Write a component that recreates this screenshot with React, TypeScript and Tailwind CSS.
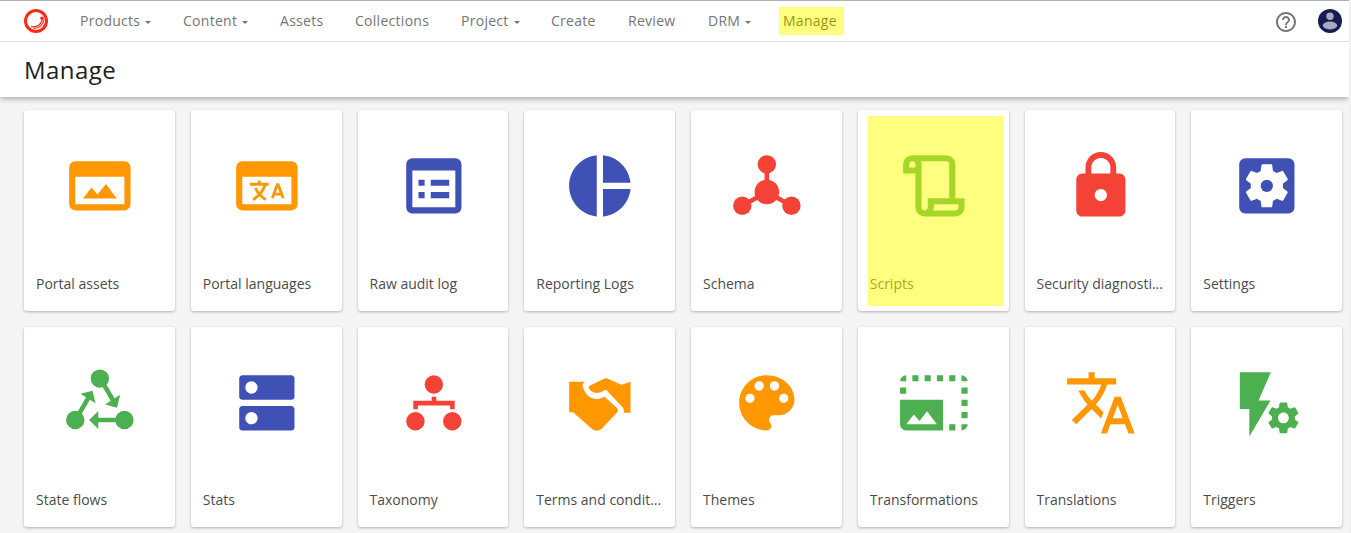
import React from "react";
import {
  MdDns,
  MdHelpOutline,
  MdLock,
  MdPhotoSizeSelectLarge,
  MdPieChart,
  MdTranslate,
} from "react-icons/md";

const GEAR =
  "M19.43 12.98c.04-.32.07-.64.07-.98s-.03-.66-.07-.98l2.11-1.65c.19-.15.24-.42.12-.64l-2-3.46c-.12-.22-.39-.3-.61-.22l-2.49 1c-.52-.4-1.08-.73-1.69-.98l-.38-2.65C14.46 2.18 14.25 2 14 2h-4c-.25 0-.46.18-.49.42l-.38 2.65c-.61.25-1.17.59-1.69.98l-2.49-1c-.23-.09-.49 0-.61.22l-2 3.46c-.13.22-.07.49.12.64l2.11 1.65c-.04.32-.07.65-.07.98s.03.66.07.98l-2.11 1.65c-.19.15-.24.42-.12.64l2 3.46c.12.22.39.3.61.22l2.49-1c.52.4 1.08.73 1.69.98l.38 2.65c.03.24.24.42.49.42h4c.25 0 .46-.18.49-.42l.38-2.65c.61-.25 1.17-.59 1.69-.98l2.49 1c.23.09.49 0 .61-.22l2-3.46c.12-.22.07-.49-.12-.64l-2.11-1.65z";
const GEAR_HOLE =
  "M12 15.5c-1.93 0-3.5-1.57-3.5-3.5s1.57-3.5 3.5-3.5 3.5 1.57 3.5 3.5-1.57 3.5-3.5 3.5z";

function Svg({ children }: { children: React.ReactNode }) {
  return (
    <svg viewBox="0 0 24 24" className="size-full" fill="currentColor">
      {children}
    </svg>
  );
}

const windowFrame = "M4 4h16a2 2 0 0 1 2 2v12a2 2 0 0 1-2 2H4a2 2 0 0 1-2-2V6a2 2 0 0 1 2-2zM4 9v9h16V9z";

const PortalAssets = () => (
  <Svg>
    <path fillRule="evenodd" d={windowFrame} />
    <path d="M6.5 16.1l2.8-3.6 1.9 2.3L14 11.4l3.5 4.7z" />
  </Svg>
);

const PortalLanguages = () => (
  <Svg>
    <path fillRule="evenodd" d={windowFrame} />
    <g fill="none" stroke="currentColor" strokeWidth="0.95">
      <path d="M6.5 11.5h6.1M9.5 10.3v1.2M11.4 11.7C10.8 13.8 9.3 15.4 7.5 16.5M8.3 12.7c.7 1.6 1.8 2.8 3.3 3.8" />
      <path d="M13.8 16l1.6-4.4h.3l1.6 4.4M14.4 14.7h2.4" />
    </g>
  </Svg>
);

const AuditLog = () => (
  <Svg>
    <path
      fillRule="evenodd"
      d="M5 3h14a2 2 0 0 1 2 2v14a2 2 0 0 1-2 2H5a2 2 0 0 1-2-2V5a2 2 0 0 1 2-2zM5 7v12h14V7z"
    />
    <path d="M7 10h2v2H7zM11 10h6v2h-6zM7 14h2v2H7zM11 14h6v2h-6z" />
  </Svg>
);

const Schema = () => (
  <Svg>
    <path d="M12 5v9M12 14l-8 4.5M12 14l8 4.5" stroke="currentColor" strokeWidth="1.5" />
    <circle cx="12" cy="5" r="3" />
    <circle cx="12" cy="14" r="4" />
    <circle cx="4" cy="18.5" r="3" />
    <circle cx="20" cy="18.5" r="3" />
  </Svg>
);

const Script = () => (
  <Svg>
    <path
      fillRule="evenodd"
      d="M5 2h11a3 3 0 0 1 3 3v11h3v3a3 3 0 0 1-3 3H9a3 3 0 0 1-3-3V8H2V5a3 3 0 0 1 3-3zM4 6h2V5a1 1 0 0 0-2 0zM7.8 4Q8 4.4 8 5v14a1 1 0 0 0 2 0v-3h7V5a1 1 0 0 0-1-1zM12 18v1q0 .5-.2 1H19a1 1 0 0 0 1-1v-1z"
    />
  </Svg>
);

const SettingsBox = () => (
  <Svg>
    <rect x="3" y="3" width="18" height="18" rx="2" />
    <path d={GEAR} fill="#fff" transform="translate(3.6 3.6) scale(.7)" />
    <circle cx="12" cy="12" r="2" />
  </Svg>
);

const StateFlows = () => (
  <Svg>
    <circle cx="12" cy="4.1" r="3" />
    <circle cx="4" cy="17.6" r="3" />
    <circle cx="20" cy="17.6" r="3" />
    <path
      d="M5 16l3.3-5.7M13 5.5l3.3 5.7M19 17.6h-8"
      stroke="currentColor"
      strokeWidth="1.5"
    />
    <path d="M9.6 8.1L5.7 9l4.9 3.1zM17.6 13.6l-3.9-1.1 4.9-3.1zM8.5 17.6l3-2.95v5.9z" />
  </Svg>
);

const Taxonomy = () => (
  <Svg>
    <circle cx="12" cy="6" r="3" />
    <circle cx="6" cy="18" r="3" />
    <circle cx="18" cy="18" r="3" />
    <path d="M11.3 10h1.5v1.3h6v2.8h-1.5v-1.2H6.8v1.2H5.3v-2.8h6z" />
  </Svg>
);

const Handshake = () => (
  <Svg>
    <path d="M2 5.1h5.2c-.6.3-.9.8-.8 1.400.4 1.700 1.400 3.100 2.600 3.800 1.400.8 3 .5 4.500-.3l4 3.600c.5.5.5 1.100 0 1.600l-4.900 5.200c-.9.8-2.300.8-3.200 0L3.300 15.100H2z" />
    <path d="M8.500 6.500L13.200 4.200q.8-.4 1.600 0L19.100 6.100 22 5.100v10.100h-2.200c.1-.8 0-1.300-.5-1.900L14 7.700 12 8.600c-1.500.4-2.800 0-3.500-1.200q-.3-.6 0-.9z" />
  </Svg>
);

const Palette = () => (
  <Svg>
    <path d="M12 3c-4.970 0-9 4.030-9 9s4.030 9 9 9c.83 0 1.500-.67 1.500-1.500 0-.39-.15-.74-.39-1.010-.23-.26-.38-.61-.38-.99 0-.83.67-1.500 1.500-1.500H16c2.760 0 5-2.240 5-5 0-4.420-4.030-8-9-8zm-5.500 9c-.83 0-1.500-.67-1.500-1.500S5.670 9 6.500 9 8 9.670 8 10.500 7.330 12 6.500 12zm3-4C8.670 8 8 7.330 8 6.500S8.670 5 9.500 5s1.500.67 1.500 1.500S10.330 8 9.500 8zm5 0c-.83 0-1.500-.67-1.500-1.500S13.670 5 14.500 5s1.500.67 1.500 1.500S15.330 8 14.500 8zm3 4c-.83 0-1.500-.67-1.500-1.500S16.670 9 17.500 9s1.500.67 1.500 1.500-.67 1.500-1.500 1.500z" />
  </Svg>
);

const Trigger = () => (
  <Svg>
    <path d="M3.200 2h10.100l-4 9.200h3.900L6.300 23v-9H3.200z" />
    <path fillRule="evenodd" d={GEAR + GEAR_HOLE} transform="translate(11.400 10.900) scale(.5)" />
  </Svg>
);

type Tile = { label: string; color: string; Icon: React.ComponentType<any>; marked?: boolean };

const ORANGE = "text-[#ff9800]";
const INDIGO = "text-[#3f51b5]";
const RED = "text-[#f44336]";
const GREEN = "text-[#4caf50]";

const tiles: Tile[] = [
  { label: "Portal assets", color: ORANGE, Icon: PortalAssets },
  { label: "Portal languages", color: ORANGE, Icon: PortalLanguages },
  { label: "Raw audit log", color: INDIGO, Icon: AuditLog },
  { label: "Reporting Logs", color: INDIGO, Icon: MdPieChart },
  { label: "Schema", color: RED, Icon: Schema },
  { label: "Scripts", color: GREEN, Icon: Script, marked: true },
  { label: "Security diagnosti...", color: RED, Icon: MdLock },
  { label: "Settings", color: INDIGO, Icon: SettingsBox },
  { label: "State flows", color: GREEN, Icon: StateFlows },
  { label: "Stats", color: INDIGO, Icon: MdDns },
  { label: "Taxonomy", color: RED, Icon: Taxonomy },
  { label: "Terms and condit...", color: ORANGE, Icon: Handshake },
  { label: "Themes", color: ORANGE, Icon: Palette },
  { label: "Transformations", color: GREEN, Icon: MdPhotoSizeSelectLarge },
  { label: "Translations", color: ORANGE, Icon: MdTranslate },
  { label: "Triggers", color: GREEN, Icon: Trigger },
];

const nav = [
  { label: "Products", width: "w-[103px]", menu: true },
  { label: "Content", width: "w-[97px]", menu: true },
  { label: "Assets", width: "w-[75px]" },
  { label: "Collections", width: "w-[106px]" },
  { label: "Project", width: "w-[90px]", menu: true },
  { label: "Create", width: "w-[77px]" },
  { label: "Review", width: "w-[80px]" },
  { label: "DRM", width: "w-[75px]", menu: true },
  { label: "Manage", width: "w-[65px]", marked: true },
];

function Logo() {
  return (
    <svg viewBox="0 0 24 24" className="size-6 shrink-0">
      <circle cx="12" cy="12" r="10.500" fill="#fff" stroke="#fb2c16" strokeWidth="3" />
      <path
        d="M17.800 9.500c.5 5-4 9-11 8.300M20 10.500c-.5 5.500-5 9.300-10.500 9"
        fill="none"
        stroke="#fb2c16"
        strokeWidth="1.100"
      />
      <path d="M19 10c0 5-4 8.700-10 8.700" fill="none" stroke="#fb2c16" strokeWidth="1" opacity=".35" />
      <circle cx="18" cy="9.300" r="1.800" fill="#fb2c16" />
    </svg>
  );
}

function Avatar() {
  return (
    <svg viewBox="0 0 24 24" className="size-6 shrink-0">
      <circle cx="12" cy="12" r="12" fill="#171c52" />
      <circle cx="12" cy="7.200" r="3.700" fill="#a9abc2" />
      <ellipse cx="12" cy="16.500" rx="7.200" ry="3.900" fill="#a9abc2" />
    </svg>
  );
}

function Card({ label, color, Icon, marked }: Tile) {
  return (
    <div className="relative flex min-w-0 flex-col rounded-[3px] bg-white shadow-[0_1px_3px_rgba(0,0,0,0.28)]">
      <div className={`flex h-[150.700px] items-center justify-center pt-[1.100px] pl-[1.100px] ${color}`}>
        <div className="size-[73.700px]">
          <Icon className="size-full" />
        </div>
      </div>
      <div className="px-3 pt-[11.900px] text-[14px] leading-[22px] whitespace-nowrap text-[#4c4c4c]">
        {label}
      </div>
      {marked && (
        <div className="absolute top-[6px] left-[10px] h-[190px] w-[135px] bg-[#ffff00] opacity-50" />
      )}
    </div>
  );
}

export default function App() {
  return (
    <div className="flex h-[533px] w-[1351px] overflow-hidden bg-[#f0f0f0] font-['Open_Sans','Noto_Sans',sans-serif]">
      <div className="flex w-[1349px] flex-col overflow-hidden bg-[#f5f5f5]">
        <header className="z-10 h-[97px] shrink-0 border-t border-[#b0b0b0] bg-white shadow-[0_1px_6px_rgba(0,0,0,0.4)]">
          <div className="flex h-[41px] items-center border-b border-[#dedede] pr-[7px] pl-6">
            <Logo />
            <nav className="ml-8 flex items-center text-[14px] tracking-[0.280px] text-[#757575]">
              {nav.map((n) => (
                <div
                  key={n.label}
                  className={`relative flex h-7 shrink-0 items-center pb-[2px] ${n.width} ${n.marked ? "text-[#2a2a2a]" : ""}`}
                >
                  {n.label}
                  {n.menu && (
                    <span className="mt-[4px] ml-[5px] border-x-[3px] border-t-[3px] border-x-transparent border-t-[#757575]" />
                  )}
                  {n.marked && (
                    <span className="absolute top-0 -left-1 h-7 w-[65px] bg-[#ffff00] opacity-50" />
                  )}
                </div>
              ))}
            </nav>
            <div className="ml-auto flex items-center gap-5">
              <MdHelpOutline className="mt-[2px] size-6 text-[#757575]" />
              <Avatar />
            </div>
          </div>
          <h1 className="pl-6 text-[24px] leading-[56px] font-medium tracking-[0.450px] text-[#212121]">
            Manage
          </h1>
        </header>
        <main className="grid w-[1342px] auto-rows-[200.500px] grid-cols-8 gap-4 pt-[13px] pl-6">
          {tiles.map((t) => (
            <Card key={t.label} {...t} />
          ))}
        </main>
      </div>
    </div>
  );
}
